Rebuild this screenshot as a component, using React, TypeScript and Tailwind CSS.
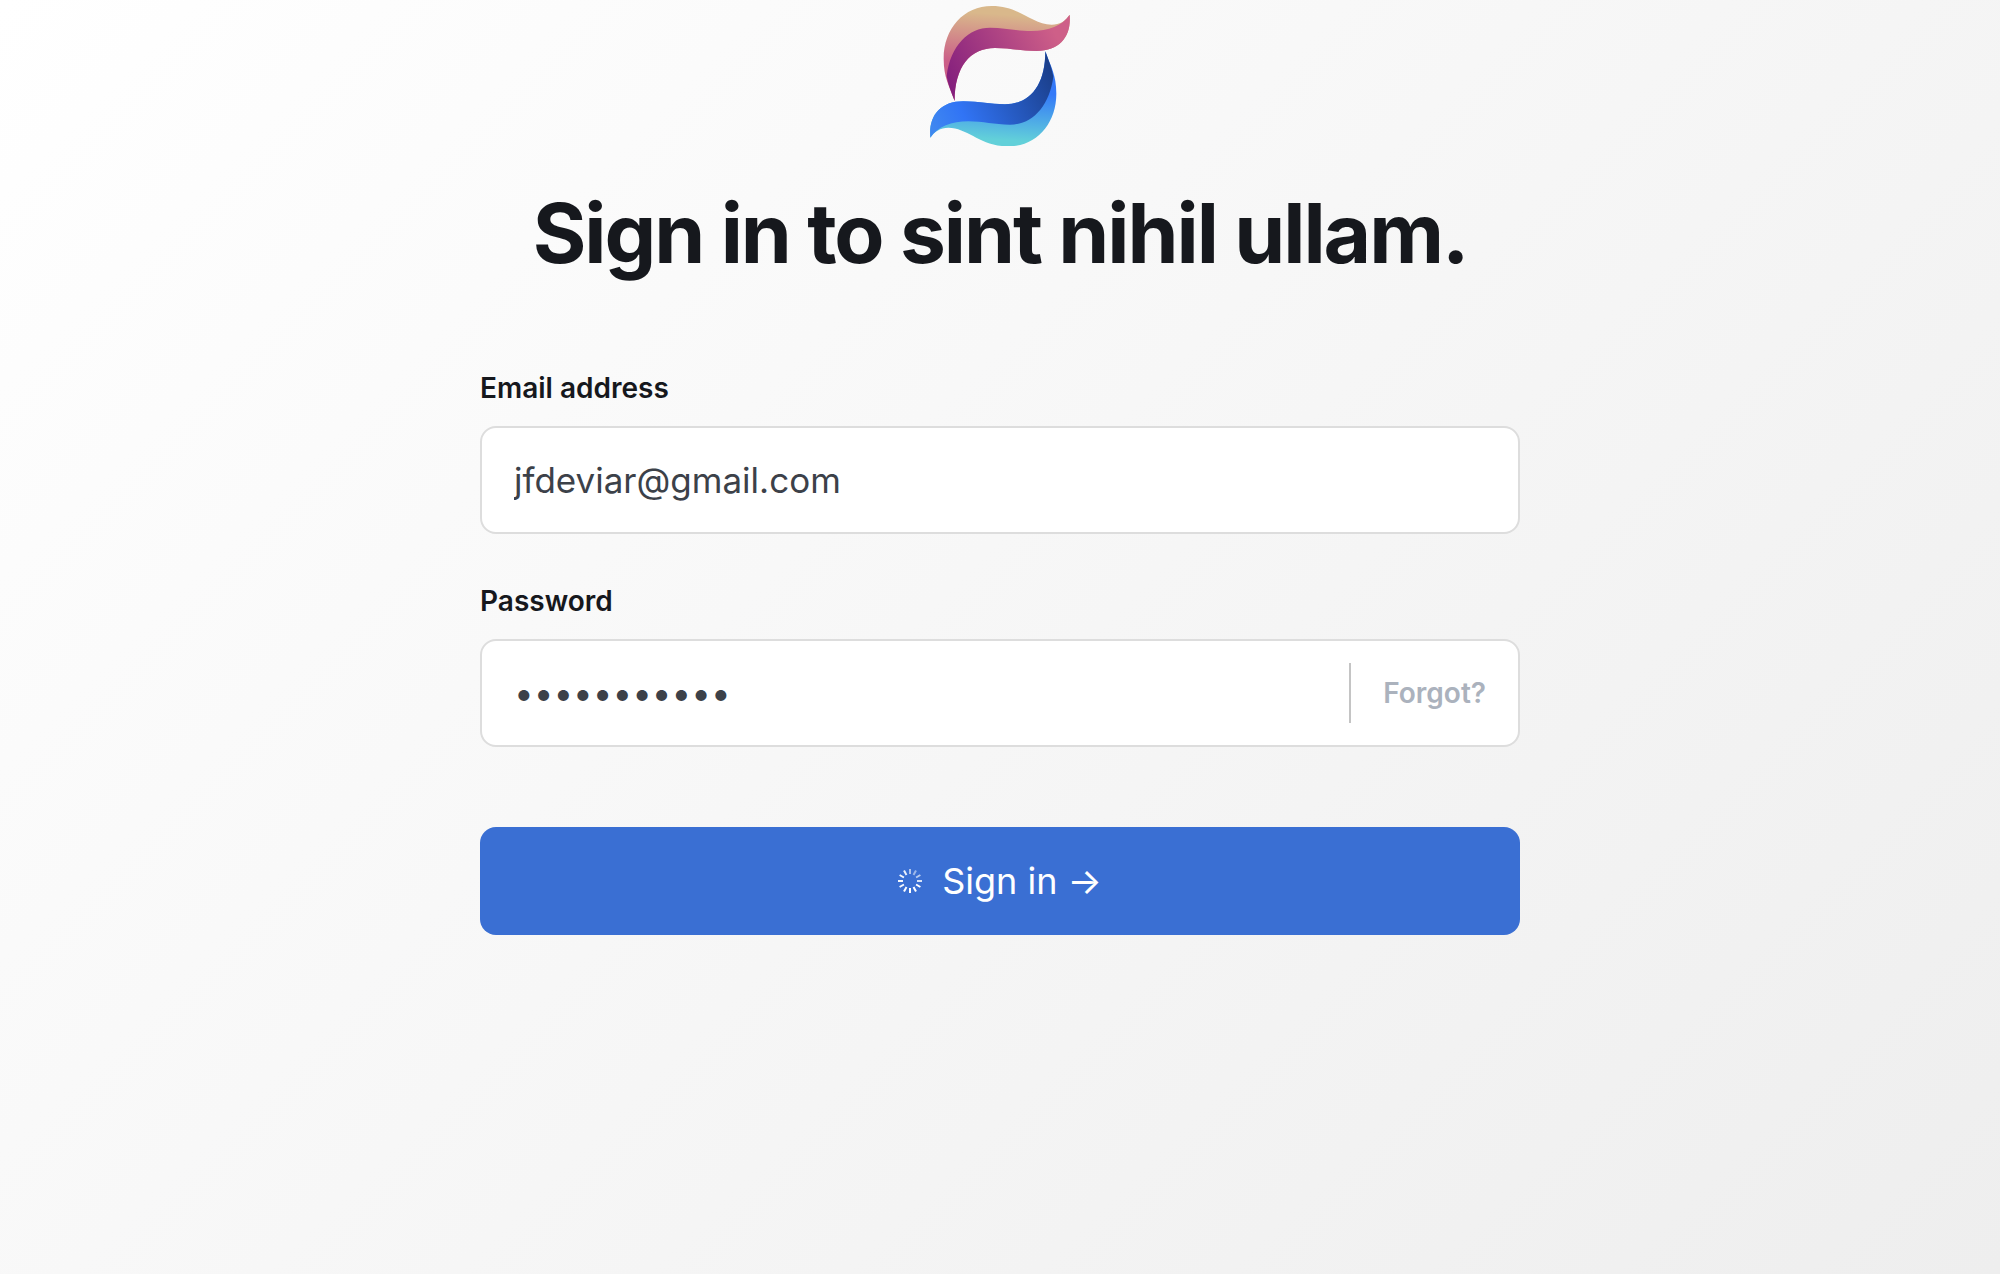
const TICKS = [0.6, 0.5, 0.65, 0.8, 1, 1, 1, 1, 0.95, 0.95, 0.95, 0.9];

function Logo() {
  const upper =
    "M104 302C88 256 71 232 71 175C71 84 132 17 215 17C300 17 334 72 395 73C419 73 436 62 449 43C455 105 422 152 350 152C298 152 272 143 225 143C150 143 104 200 104 302Z";
  const fold =
    "M104 302C93 272 84 252 80 226C92 135 145 82 210 82C258 82 290 92 335 92C385 92 427 76 449 43C455 105 422 152 350 152C298 152 272 143 225 143C150 143 104 200 104 302Z";
  return (
    <svg className="size-35" viewBox="30 17 420 420" role="img" aria-label="Logo">
      <defs>
        <linearGradient id="tan" gradientUnits="userSpaceOnUse" x1="215" y1="40" x2="205" y2="190">
          <stop offset="0" stopColor="#d9b88b" />
          <stop offset="1" stopColor="#cb5e88" />
        </linearGradient>
        <linearGradient id="magenta" gradientUnits="userSpaceOnUse" x1="90" y1="260" x2="400" y2="90">
          <stop offset="0" stopColor="#841f7d" />
          <stop offset="1" stopColor="#ce5f88" />
        </linearGradient>
        <linearGradient id="cyan" gradientUnits="userSpaceOnUse" x1="215" y1="35" x2="205" y2="180">
          <stop offset="0" stopColor="#62d0d9" />
          <stop offset="1" stopColor="#3479f8" />
        </linearGradient>
        <linearGradient id="navy" gradientUnits="userSpaceOnUse" x1="90" y1="250" x2="445" y2="80">
          <stop offset="0" stopColor="#1b3f8b" />
          <stop offset="0.75" stopColor="#3174f5" />
          <stop offset="1" stopColor="#3f87f0" />
        </linearGradient>
      </defs>
      <path d={upper} fill="url(#tan)" />
      <path d={fold} fill="url(#magenta)" />
      <g transform="rotate(180 240 227.5)">
        <path d={upper} fill="url(#cyan)" />
        <path d={fold} fill="url(#navy)" />
      </g>
    </svg>
  );
}

function Spinner() {
  return (
    <svg className="size-6" viewBox="0 0 24 24" aria-hidden="true">
      {TICKS.map((opacity, i) => (
        <path
          key={i}
          d="M12 0V5"
          stroke="white"
          strokeWidth="2"
          opacity={opacity}
          transform={`rotate(${i * 30} 12 12)`}
        />
      ))}
    </svg>
  );
}

export default function App() {
  return (
    <main className="flex min-h-screen flex-col items-center bg-linear-135 from-white to-[#eeeeee] px-8 pt-1.5 font-['Inter',sans-serif]">
      <Logo />
      <h1 className="mt-10 text-center text-[82px] leading-24 font-bold tracking-tight text-[#16181d]">
        Sign in to sint nihil ullam.
      </h1>
      <form className="mt-21 flex w-full max-w-260 flex-col" onSubmit={(e) => e.preventDefault()}>
        <label htmlFor="email" className="text-[28px] leading-11 font-semibold text-[#16181d]">
          Email address
        </label>
        <input
          id="email"
          type="email"
          defaultValue="jfdeviar@gmail.com"
          className="mt-4 h-27 w-full rounded-2xl border-2 border-[#dddddd] bg-white px-8 text-[35px] text-[#3c4149] outline-none"
        />
        <label htmlFor="password" className="mt-[45px] text-[28px] leading-11 font-semibold text-[#16181d]">
          Password
        </label>
        <div className="mt-4 flex h-27 items-center rounded-2xl border-2 border-[#dddddd] bg-white">
          <input
            id="password"
            type="password"
            defaultValue="abcdefghijk"
            className="h-full min-w-0 flex-1 bg-transparent pl-8 text-[35px] text-[#3c4149] outline-none"
          />
          <a href="#forgot" className="flex h-15 items-center border-l-2 border-[#c4c4c4] px-8 text-[28px] font-semibold text-[#abb2bd]">
            Forgot?
          </a>
        </div>
        <button type="submit" className="mt-20 flex h-27 items-center justify-center rounded-2xl bg-[#3a6fd3] text-4xl text-white">
          <Spinner />
          <span className="ml-5">Sign in →</span>
        </button>
      </form>
    </main>
  );
}
